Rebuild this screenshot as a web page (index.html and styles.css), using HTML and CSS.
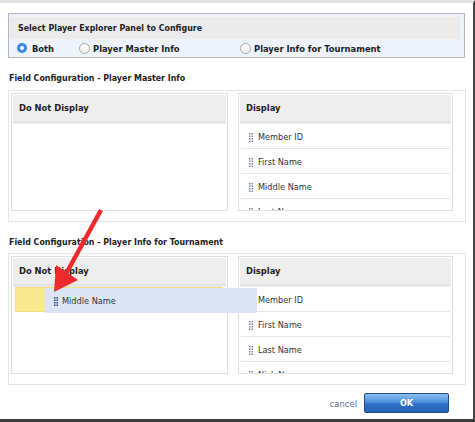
FILE: index.html
```html
<!DOCTYPE html>
<html>
<head>
<meta charset="utf-8">
<link rel="stylesheet" href="styles.css">
</head>
<body>
<div class="frame">
  <div class="window">
    <div class="selector">
      <div class="selector-head">Select Player Explorer Panel to Configure</div>
      <div class="radios">
        <label class="opt opt-1"><span class="radio on"></span>Both</label>
        <label class="opt opt-2"><span class="radio"></span>Player Master Info</label>
        <label class="opt opt-3"><span class="radio"></span>Player Info for Tournament</label>
      </div>
    </div>

    <div class="section-title">Field Configuration - Player Master Info</div>
    <div class="section">
      <div class="panel">
        <div class="panel-head">Do Not Display</div>
        <div class="list"></div>
      </div>
      <div class="panel">
        <div class="panel-head">Display</div>
        <div class="list">
          <div class="row"><svg class="grip" width="4" height="9" viewBox="0 0 4 9"><g fill="#7d8aa6"><rect x="0" y="0" width="1.5" height="1.5"/><rect x="2.5" y="0" width="1.5" height="1.5"/><rect x="0" y="2.5" width="1.5" height="1.5"/><rect x="2.5" y="2.5" width="1.5" height="1.5"/><rect x="0" y="5" width="1.5" height="1.5"/><rect x="2.5" y="5" width="1.5" height="1.5"/><rect x="0" y="7.5" width="1.5" height="1.5"/><rect x="2.5" y="7.5" width="1.5" height="1.5"/></g></svg><span>Member ID</span></div>
          <div class="row"><svg class="grip" width="4" height="9" viewBox="0 0 4 9"><g fill="#7d8aa6"><rect x="0" y="0" width="1.5" height="1.5"/><rect x="2.5" y="0" width="1.5" height="1.5"/><rect x="0" y="2.5" width="1.5" height="1.5"/><rect x="2.5" y="2.5" width="1.5" height="1.5"/><rect x="0" y="5" width="1.5" height="1.5"/><rect x="2.5" y="5" width="1.5" height="1.5"/><rect x="0" y="7.5" width="1.5" height="1.5"/><rect x="2.5" y="7.5" width="1.5" height="1.5"/></g></svg><span>First Name</span></div>
          <div class="row"><svg class="grip" width="4" height="9" viewBox="0 0 4 9"><g fill="#7d8aa6"><rect x="0" y="0" width="1.5" height="1.5"/><rect x="2.5" y="0" width="1.5" height="1.5"/><rect x="0" y="2.5" width="1.5" height="1.5"/><rect x="2.5" y="2.5" width="1.5" height="1.5"/><rect x="0" y="5" width="1.5" height="1.5"/><rect x="2.5" y="5" width="1.5" height="1.5"/><rect x="0" y="7.5" width="1.5" height="1.5"/><rect x="2.5" y="7.5" width="1.5" height="1.5"/></g></svg><span>Middle Name</span></div>
          <div class="row"><svg class="grip" width="4" height="9" viewBox="0 0 4 9"><g fill="#7d8aa6"><rect x="0" y="0" width="1.5" height="1.5"/><rect x="2.5" y="0" width="1.5" height="1.5"/><rect x="0" y="2.5" width="1.5" height="1.5"/><rect x="2.5" y="2.5" width="1.5" height="1.5"/><rect x="0" y="5" width="1.5" height="1.5"/><rect x="2.5" y="5" width="1.5" height="1.5"/><rect x="0" y="7.5" width="1.5" height="1.5"/><rect x="2.5" y="7.5" width="1.5" height="1.5"/></g></svg><span>Last Name</span></div>
        </div>
      </div>
    </div>

    <div class="section-title second">Field Configuration - Player Info for Tournament</div>
    <div class="section">
      <div class="panel">
        <div class="panel-head">Do Not Display</div>
        <div class="list">
          <div class="placeholder"></div>
        </div>
      </div>
      <div class="panel">
        <div class="panel-head">Display</div>
        <div class="list">
          <div class="row"><svg class="grip" width="4" height="9" viewBox="0 0 4 9"><g fill="#7d8aa6"><rect x="0" y="0" width="1.5" height="1.5"/><rect x="2.5" y="0" width="1.5" height="1.5"/><rect x="0" y="2.5" width="1.5" height="1.5"/><rect x="2.5" y="2.5" width="1.5" height="1.5"/><rect x="0" y="5" width="1.5" height="1.5"/><rect x="2.5" y="5" width="1.5" height="1.5"/><rect x="0" y="7.5" width="1.5" height="1.5"/><rect x="2.5" y="7.5" width="1.5" height="1.5"/></g></svg><span>Member ID</span></div>
          <div class="row"><svg class="grip" width="4" height="9" viewBox="0 0 4 9"><g fill="#7d8aa6"><rect x="0" y="0" width="1.5" height="1.5"/><rect x="2.5" y="0" width="1.5" height="1.5"/><rect x="0" y="2.5" width="1.5" height="1.5"/><rect x="2.5" y="2.5" width="1.5" height="1.5"/><rect x="0" y="5" width="1.5" height="1.5"/><rect x="2.5" y="5" width="1.5" height="1.5"/><rect x="0" y="7.5" width="1.5" height="1.5"/><rect x="2.5" y="7.5" width="1.5" height="1.5"/></g></svg><span>First Name</span></div>
          <div class="row"><svg class="grip" width="4" height="9" viewBox="0 0 4 9"><g fill="#7d8aa6"><rect x="0" y="0" width="1.5" height="1.5"/><rect x="2.5" y="0" width="1.5" height="1.5"/><rect x="0" y="2.5" width="1.5" height="1.5"/><rect x="2.5" y="2.5" width="1.5" height="1.5"/><rect x="0" y="5" width="1.5" height="1.5"/><rect x="2.5" y="5" width="1.5" height="1.5"/><rect x="0" y="7.5" width="1.5" height="1.5"/><rect x="2.5" y="7.5" width="1.5" height="1.5"/></g></svg><span>Last Name</span></div>
          <div class="row"><svg class="grip" width="4" height="9" viewBox="0 0 4 9"><g fill="#7d8aa6"><rect x="0" y="0" width="1.5" height="1.5"/><rect x="2.5" y="0" width="1.5" height="1.5"/><rect x="0" y="2.5" width="1.5" height="1.5"/><rect x="2.5" y="2.5" width="1.5" height="1.5"/><rect x="0" y="5" width="1.5" height="1.5"/><rect x="2.5" y="5" width="1.5" height="1.5"/><rect x="0" y="7.5" width="1.5" height="1.5"/><rect x="2.5" y="7.5" width="1.5" height="1.5"/></g></svg><span>Nick Name</span></div>
        </div>
      </div>
    </div>

    <div class="footer">
      <a class="cancel">cancel</a>
      <button class="ok">OK</button>
    </div>
  </div>

  <div class="drag-helper"><svg class="grip" width="4" height="9" viewBox="0 0 4 9"><g fill="#2c3f7c"><rect x="0" y="0" width="1.5" height="1.5"/><rect x="2.5" y="0" width="1.5" height="1.5"/><rect x="0" y="2.5" width="1.5" height="1.5"/><rect x="2.5" y="2.5" width="1.5" height="1.5"/><rect x="0" y="5" width="1.5" height="1.5"/><rect x="2.5" y="5" width="1.5" height="1.5"/><rect x="0" y="7.5" width="1.5" height="1.5"/><rect x="2.5" y="7.5" width="1.5" height="1.5"/></g></svg><span>Middle Name</span></div>

  <svg class="arrow" width="475" height="422" viewBox="0 0 475 422">
    <line x1="101" y1="210" x2="67" y2="272" stroke="#ef2a2c" stroke-width="4.5"/>
    <polygon points="54,292 56,265 78,280" fill="#ef2a2c"/>
  </svg>
</div>
</body>
</html>
```

FILE: styles.css
```css
body {
  margin: 0;
  background: #ffffff;
  font-family: "DejaVu Sans Condensed", "DejaVu Sans", sans-serif;
  color: #222222;
}

.frame {
  position: relative;
  width: 475px;
  height: 422px;
  overflow: hidden;
}

.window {
  box-sizing: border-box;
  width: 475px;
  height: 422px;
  border-top: 3px solid #e3e3e3;
  border-bottom: 3px solid #3d3d3d;
  border-right: 2px solid #454545;
  padding: 10px 0 0 8px;
}

.selector {
  box-sizing: border-box;
  width: 457px;
  border: 1px solid #b6b6b6;
  background: #edf2fb;
  padding: 3px 4px 0 1px;
}

.selector-head {
  height: 22px;
  line-height: 22px;
  background: #ebebeb;
  padding-left: 8px;
  font-weight: bold;
  font-size: 8.8px;
  color: #222;
}

.radios {
  height: 18px;
  display: flex;
  align-items: center;
  padding-left: 7px;
  font-weight: bold;
  font-size: 9.3px;
  color: #1e1e1e;
}

.opt {
  display: flex;
  align-items: center;
}

.opt-1 { width: 62px; }
.opt-2 { width: 161px; }
.opt-3 { flex: 1; }

.radio {
  box-sizing: border-box;
  width: 11px;
  height: 11px;
  border-radius: 50%;
  border: 1px solid #a9a9a9;
  background: linear-gradient(#ffffff, #ececec);
  margin-right: 3px;
  flex: none;
}

.radio.on {
  width: 10px;
  height: 10px;
  border: none;
  background: radial-gradient(circle, #ffffff 0 1.6px, #3c8fe6 2.2px, #2c7bd8 100%);
  margin-right: 5px;
}

.section-title {
  margin: 13px 0 5px 1px;
  height: 14px;
  line-height: 14px;
  font-weight: bold;
  font-size: 8.8px;
  color: #222;
}

.section-title.second {
  margin-bottom: 4px;
}

.section {
  box-sizing: border-box;
  width: 458px;
  border: 1px solid #e5e5e5;
  padding: 2px 12px 10px 2px;
  display: grid;
  grid-template-columns: 217px 215px;
  column-gap: 10px;
}

.panel {
  box-sizing: border-box;
  height: 118px;
  border: 1px solid #dfdfdf;
  padding: 1px;
  overflow: hidden;
  background: #ffffff;
}

.panel-head {
  height: 26px;
  line-height: 26px;
  background: #eeeeee;
  border-bottom: 2px solid #e4e4e4;
  padding-left: 6px;
  font-weight: bold;
  font-size: 9.3px;
  color: #1e1e1e;
}

.list {
  margin: 0 1px;
  border-top: 1px solid #eaeaea;
}

.row {
  border-bottom: 1px solid #e6e6e6;
  display: flex;
  align-items: center;
  padding: 2px 0 0 8px;
  box-sizing: content-box;
  height: 22px;
  font-size: 9.1px;
  color: #333333;
}

.grip {
  flex: none;
  margin-right: 5px;
}

.placeholder {
  box-sizing: border-box;
  height: 25px;
  margin: 0 2px 0 1px;
  background: #fbe98f;
  border: 1px solid #f5e07c;
}

.footer {
  box-sizing: border-box;
  width: 458px;
  margin-top: 8px;
  padding-right: 17px;
  display: flex;
  justify-content: flex-end;
  align-items: center;
}

.cancel {
  font-size: 9.4px;
  color: #5e708c;
  margin-right: 7px;
  margin-top: 1px;
}

.ok {
  box-sizing: border-box;
  width: 85px;
  height: 20px;
  border: 1px solid #1d4e91;
  border-radius: 2px;
  background: linear-gradient(#8cc0f2, #4d8fdc 45%, #2f72c8 55%, #2561b4);
  color: #ffffff;
  font-family: "DejaVu Sans Condensed", "DejaVu Sans", sans-serif;
  font-weight: bold;
  font-size: 9px;
  padding: 0;
}

.drag-helper {
  position: absolute;
  left: 45px;
  top: 288px;
  box-sizing: border-box;
  width: 212px;
  height: 25px;
  background: #dce5f6;
  display: flex;
  align-items: center;
  padding: 1px 0 0 9px;
  font-size: 9.1px;
  color: #333333;
}

.drag-helper .grip {
  margin-right: 4px;
}

.arrow {
  position: absolute;
  left: 0;
  top: 0;
  pointer-events: none;
}
```
